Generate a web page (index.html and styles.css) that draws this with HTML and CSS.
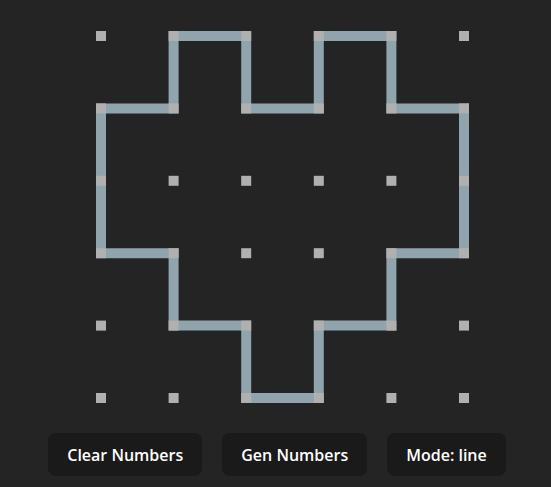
FILE: index.html
```html
<!DOCTYPE html>
<html lang="en">
<head>
    <meta charset="UTF-8">
    <meta name="viewport" content="width=device-width, initial-scale=1.0">
    <title>Loop Puzzle</title>
    <link rel="stylesheet" href="styles.css">
</head>
<body>
    <div class="app">
        <svg class="board" width="373" height="372" viewBox="0 0 373 372">
            <!-- o caminho fechado (linhas) -->
            <polyline class="loop" points="
                77.6,5 150.2,5 150.2,77.4 222.8,77.4 222.8,5 295.4,5 295.4,77.4 368,77.4
                368,222.2 295.4,222.2 295.4,294.6 222.8,294.6 222.8,367 150.2,367 150.2,294.6
                77.6,294.6 77.6,222.2 5,222.2 5,77.4 77.6,77.4 77.6,5" />
            <g id="dots"></g>
        </svg>

        <div class="controls">
            <button type="button">Clear Numbers</button>
            <button type="button">Gen Numbers</button>
            <button type="button">Mode: line</button>
        </div>
    </div>

    <script>
        // desenha os pontos da grade 6x6 por cima das linhas
        const dots = document.getElementById("dots");
        for (let row = 0; row < 6; row++) {
            for (let col = 0; col < 6; col++) {
                const r = document.createElementNS("http://www.w3.org/2000/svg", "rect");
                r.setAttribute("x", col * 72.6);
                r.setAttribute("y", row * 72.4);
                r.setAttribute("width", 10);
                r.setAttribute("height", 10);
                r.setAttribute("class", "dot");
                dots.appendChild(r);
            }
        }
    </script>
</body>
</html>
```

FILE: styles.css
```css
body {
    margin: 0;
    background-color: #242424;
    color: rgba(255, 255, 255, 0.87);
    font-family: "Open Sans", "Noto Sans", sans-serif;
}
.app {
    display: flex;
    flex-direction: column;
    align-items: center;
    padding-top: 31px;
}
.board {
    display: block;
    margin-left: 14px;
}
.loop {
    fill: none;
    stroke: #90a4ae;
    stroke-width: 10;
    stroke-linecap: square;
    stroke-linejoin: miter;
}
.dot {
    fill: #b0b0b0;
}
.controls {
    display: flex;
    gap: 20px;
    margin-top: 30px;
    margin-left: 3px;
}
button {
    border: none;
    border-radius: 8px;
    padding: 0 19px;
    height: 43px;
    font-size: 16px;
    font-weight: 600;
    font-family: inherit;
    color: #ffffff;
    background-color: #1a1a1a;
    cursor: pointer;
}
button:hover {
    border-color: #646cff;
}
```
